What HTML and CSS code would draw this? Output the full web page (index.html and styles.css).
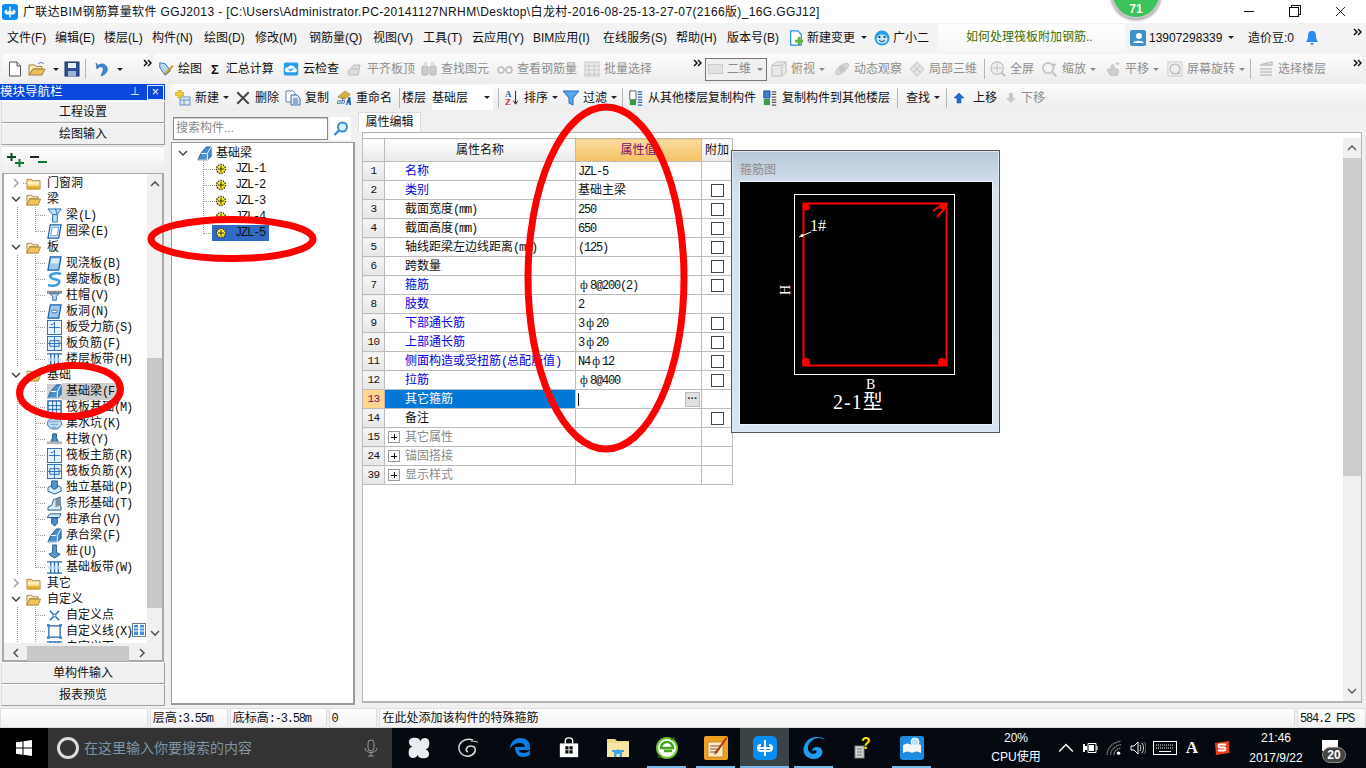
FILE: index.html
```html
<!DOCTYPE html>
<html lang="zh-CN">
<head>
<meta charset="utf-8">
<title>广联达BIM钢筋算量软件 GGJ2013</title>
<link rel="stylesheet" href="styles.css">
</head>
<body>
<svg class="defs" width="0" height="0" aria-hidden="true">
<defs>
<symbol id="logo" viewBox="0 0 16 16"><rect x="0" y="0" width="16" height="16" rx="3" fill="#0a8cf0"/><path d="M8 2.5v11M3 8h10M5 6.2a1.8 1.8 0 1 0 0 3.6h6a1.8 1.8 0 1 0 0-3.6" fill="none" stroke="#fff" stroke-width="1.4"/></symbol>
<symbol id="mr" viewBox="0 0 9 8"><path d="M1 1l3 3-3 3M5 1l3 3-3 3" fill="none" stroke="#111" stroke-width="1.500"/></symbol>
<symbol id="fold" viewBox="0 0 16 16"><path d="M1 3.500h5l1 1.500h8v9H1z" fill="#f6d777" stroke="#a98b4a"/><path d="M2 6h12v3H2z" fill="#fdf3c4"/><path d="M1.500 11h13v3h-13z" fill="#e0a92c"/></symbol>
<symbol id="foldo" viewBox="0 0 16 16"><path d="M1 3.500h5l1 1.500h6v2H4L1 14z" fill="#fbeebc" stroke="#a98b4a"/><path d="M4 7.500h11.500L13 14H1z" fill="#f2c55c" stroke="#a98b4a"/></symbol>
<symbol id="chd" viewBox="0 0 10 10"><path d="M1 3l4 4 4-4" fill="none" stroke="#444" stroke-width="1.500"/></symbol>
<symbol id="chr" viewBox="0 0 10 10"><path d="M3 1l4 4-4 4" fill="none" stroke="#aaa" stroke-width="1.700"/></symbol>
<symbol id="beam" viewBox="0 0 16 16"><path d="M1 1h14l-4 6v8H6V7z" fill="#bfe0f8" stroke="#2a6db5"/><path d="M6 7h5M9 1l2 6" stroke="#2a6db5" fill="none"/></symbol>
<symbol id="ring" viewBox="0 0 16 16"><path d="M3.500 1H15l-2.500 14H1z" fill="#e8f3fc" stroke="#1b5ea8" stroke-width="1.300"/><path d="M5.500 3.500H12.500L11 12.500H4z" fill="#fff" stroke="#5a9bd8"/></symbol>
<symbol id="slab" viewBox="0 0 16 16"><path d="M3.500 1H15l-2.500 14H1z" fill="#9cc8ef" stroke="#1b5ea8" stroke-width="1.300"/><path d="M5 3h8L12 8H4z" fill="#dff0fc"/></symbol>
<symbol id="spiral" viewBox="0 0 16 16"><path d="M15 2C8 0 1 3 4 6s10 1 9 5-7 4-12 3" fill="none" stroke="#3b9be0" stroke-width="2.600"/></symbol>
<symbol id="cap" viewBox="0 0 16 16"><path d="M0 3h16v3H0z" fill="#8d8d8d"/><path d="M3 6h10L10 9v4H6V9z" fill="#c9d4de" stroke="#2a6db5"/></symbol>
<symbol id="hole" viewBox="0 0 16 16"><path d="M3.500 1H15l-2.500 14H1z" fill="#9cc8ef" stroke="#1b5ea8" stroke-width="1.300"/><ellipse cx="8" cy="8" rx="3" ry="1.500" fill="#fff" stroke="#1b5ea8"/></symbol>
<symbol id="grid1" viewBox="0 0 16 16"><rect x=".5" y=".5" width="15" height="15" fill="#e8f3fc" stroke="#2a6db5"/><path d="M8 2v12M2 8h12M4 5c2 0 3-1 4-2" fill="none" stroke="#2a6db5"/></symbol>
<symbol id="grid2" viewBox="0 0 16 16"><rect x=".5" y=".5" width="15" height="15" fill="#dceefc" stroke="#2a6db5"/><path d="M8 1v14M3 5v6h10V5zM1 8h14" fill="none" stroke="#2a6db5"/></symbol>
<symbol id="band" viewBox="0 0 16 16"><path d="M0 2h16M0 14h16M4 2v12M8 2v12M12 2v12" fill="none" stroke="#1f66b0" stroke-width="1.400"/><path d="M1 6h14v4H1z" fill="#bcdcf5" opacity=".7"/></symbol>
<symbol id="fbeam" viewBox="0 0 16 16"><path d="M1 15l3-7 6-7h5v10l-4 4z" fill="#4b8ed0" stroke="#14528f"/><path d="M1 15h10V8l4-7M4 8h6" fill="none" stroke="#fff"/></symbol>
<symbol id="raft" viewBox="0 0 16 16"><rect x="1" y="1" width="14" height="14" fill="#e8f3fc" stroke="#1b5ea8" stroke-width="1.400"/><path d="M1 6h14M1 10h14M6 1v14M10 1v14" stroke="#1b5ea8" fill="none"/></symbol>
<symbol id="pit" viewBox="0 0 16 16"><ellipse cx="8" cy="8" rx="7.500" ry="6" fill="#bcdcf5" stroke="#2a6db5"/><path d="M3 6h10M4 9h8M6 12h4" stroke="#2a6db5" stroke-dasharray="1 1" fill="none"/></symbol>
<symbol id="pier" viewBox="0 0 16 16"><path d="M6 2h4v4l2 4H4l2-4z" fill="#4b8ed0" stroke="#14528f"/><rect x="0" y="10" width="16" height="3" fill="#b8b8b8"/></symbol>
<symbol id="iso" viewBox="0 0 16 16"><path d="M1 8l7-4 7 4v4l-7 3-7-3z" fill="#dbeaf7" stroke="#1b5ea8"/><path d="M5 1h6v7l-3 2-3-2z" fill="#5b97d2" stroke="#14528f"/></symbol>
<symbol id="strip" viewBox="0 0 16 16"><path d="M1 15v-3l4-2 2-6 7-3v9l1 2v3z" fill="#dbeaf7" stroke="#14528f"/><path d="M9 4l5-3v9l-5 2z" fill="#7e8f9f"/></symbol>
<symbol id="ptc" viewBox="0 0 16 16"><path d="M3 2h12l-2 4H0z" fill="#dbeaf7" stroke="#14528f"/><path d="M5 6h6v6l-3 3-3-3z" fill="#4b8ed0" stroke="#14528f"/></symbol>
<symbol id="pile" viewBox="0 0 16 16"><path d="M6 1h4v8l4 2-6 4-6-4 4-2z" fill="#5b97d2" stroke="#14528f"/></symbol>
<symbol id="xpt" viewBox="0 0 16 16"><path d="M3 3l10 10M13 3L3 13" stroke="#1b6fc0" stroke-width="1.500"/><circle cx="8" cy="8" r="1.500" fill="#fff" stroke="#1b6fc0"/></symbol>
<symbol id="xln" viewBox="0 0 16 16"><rect x="2" y="2" width="12" height="12" fill="none" stroke="#1b5ea8" stroke-width="1.300"/><path d="M0 0h3v3H0zM13 0h3v3h-3zM0 13h3v3H0zM13 13h3v3h-3z" fill="#3f8fe0"/></symbol>
<symbol id="gear" viewBox="0 0 12 12"><circle cx="6" cy="6" r="4.500" fill="#ffef30" stroke="#333" stroke-width="1.400" stroke-dasharray="1.500 1"/><path d="M3 6h6M6 3v6" stroke="#333"/></symbol>
<symbol id="new" viewBox="0 0 16 16"><path d="M2.500 1H10l3.500 4v10h-11z" fill="#fff" stroke="#555"/><path d="M10 1v4h3.500" fill="#ddd" stroke="#555"/></symbol>
<symbol id="open" viewBox="0 0 18 16"><path d="M1 4h6l1 1.500h6V8H5L1 14z" fill="#fbeebc" stroke="#a2823e"/><path d="M5 8h12l-3 6H1z" fill="#ecbe5c" stroke="#a2823e"/><path d="M10 3c2-2 4-2 6 0" fill="none" stroke="#4170b0"/></symbol>
<symbol id="save" viewBox="0 0 16 16"><rect x="1" y="1" width="14" height="14" fill="#2b4e96" stroke="#1c2f66"/><rect x="4" y="2" width="8" height="5" fill="#e8eef8"/><rect x="4" y="10" width="8" height="5" fill="#9fb3d8"/></symbol>
<symbol id="undo" viewBox="0 0 16 16"><path d="M3 2l1 6 2-1.800c3-1.500 5 1 4 3.500L8 15c5-1.500 7-5 6-8.500C12.500 2.500 8 2 5 4.500z" fill="#3f86d8" stroke="#20589c" stroke-width=".6"/></symbol>
<symbol id="draw" viewBox="0 0 18 18"><path d="M2 2l6 1 6 8-6 5-6-9z" fill="#bcd6f0" stroke="#2a6db5"/><path d="M7 14l9-9 1 1-8 9z" fill="#e0b030" stroke="#8a6a10" stroke-width=".6"/></symbol>
<symbol id="cloud" viewBox="0 0 20 20"><rect x="1" y="2" width="18" height="16" rx="2" fill="#2a9de8"/><path d="M5 14a3 3 0 0 1 1-6 5 5 0 0 1 9 1 2.500 2.500 0 0 1 0 5z" fill="#fff"/><path d="M7 10l2 2 4-3" fill="none" stroke="#2a9de8" stroke-width="1.500"/></symbol>
<symbol id="dim" viewBox="0 0 16 16"><path d="M1 10l6-6h6l-2 10H2z" fill="#ddd" stroke="#bbb"/><path d="M5 8h6" stroke="#bbb"/></symbol>
<symbol id="bino" viewBox="0 0 16 16"><rect x="1" y="5" width="6" height="9" rx="1" fill="#ccc" stroke="#b5b5b5"/><rect x="9" y="5" width="6" height="9" rx="1" fill="#ccc" stroke="#b5b5b5"/><rect x="3" y="1" width="3" height="4" fill="#ddd"/><rect x="10" y="1" width="3" height="4" fill="#ddd"/></symbol>
<symbol id="glass" viewBox="0 0 16 16"><circle cx="4" cy="9" r="3" fill="none" stroke="#bbb" stroke-width="1.400"/><circle cx="12" cy="9" r="3" fill="none" stroke="#bbb" stroke-width="1.400"/><path d="M7 9h2M14 5v3" stroke="#bbb"/></symbol>
<symbol id="batch" viewBox="0 0 16 16"><rect x="1" y="1" width="14" height="14" fill="#eee" stroke="#c8c8c8"/><path d="M1 5h14M1 9h14M1 13h14M5 1v14M10 1v14" stroke="#c8c8c8"/></symbol>
<symbol id="cube" viewBox="0 0 18 18"><path d="M1 5l5-4h11v12l-5 4H1z" fill="#e9e9e9" stroke="#bbb"/><path d="M1 5h11v12M12 5l5-4" fill="none" stroke="#bbb"/></symbol>
<symbol id="orbit" viewBox="0 0 18 18"><ellipse cx="9" cy="9" rx="9" ry="4" transform="rotate(-40 9 9)" fill="#d8d8d8" stroke="#c4c4c4"/><circle cx="9" cy="9" r="4" fill="#c8c8c8"/></symbol>
<symbol id="local" viewBox="0 0 18 18"><path d="M1 9l8-8 8 8-8 8z" fill="#e4e4e4" stroke="#bbb"/><path d="M5 5l8 8M13 5l-8 8" stroke="#bbb"/></symbol>
<symbol id="fit" viewBox="0 0 18 18"><circle cx="8" cy="8" r="7" fill="#f0f0f0" stroke="#bbb" stroke-width="1.200"/><path d="M8 3v10M3 8h10" stroke="#bbb"/><path d="M13 13l4 4" stroke="#bbb" stroke-width="2"/></symbol>
<symbol id="zoom" viewBox="0 0 18 18"><circle cx="7" cy="8" r="6" fill="#f4f4f4" stroke="#c4c4c4" stroke-width="2"/><path d="M12 13l4 4" stroke="#bbb" stroke-width="2"/><path d="M14 2v4M12 4h4" stroke="#bbb"/></symbol>
<symbol id="pan" viewBox="0 0 18 18"><path d="M3 11c-1-3 3-2 4-1V5c1-1 2-1 3 0v3l4 1c2 1 1 4 0 7H6z" fill="#cfcfcf" stroke="#bbb"/><path d="M14 1v4M12 3h4" stroke="#bbb"/></symbol>
<symbol id="rot" viewBox="0 0 18 18"><rect x="1" y="1" width="16" height="16" fill="#eee" stroke="#ccc"/><circle cx="9" cy="9" r="5.500" fill="none" stroke="#bbb" stroke-width="1.500"/><path d="M12 14l3 1-1-3" fill="#bbb"/></symbol>
<symbol id="floors" viewBox="0 0 16 16"><path d="M2 4l12-3v3zM2 8h12M2 11h12M2 14h12" fill="none" stroke="#c0c0c0" stroke-width="1.400"/></symbol>
<symbol id="add" viewBox="0 0 16 16"><rect x="5" y="7" width="10" height="8" fill="#dbe9f8" stroke="#6a8fbf"/><path d="M5 10h10M9 10v5" stroke="#6a8fbf"/><path d="M3 0h3v2.500h2.500v3H6V8H3V5.500H.5v-3H3z" fill="#f4d23e" stroke="#b59a20" stroke-width=".6"/></symbol>
<symbol id="del" viewBox="0 0 14 14"><path d="M2 2l10 10M12 2L2 12" stroke="#444" stroke-width="1.700"/></symbol>
<symbol id="copy" viewBox="0 0 16 16"><path d="M1 1h7l2 2v9H1z" fill="#fff" stroke="#6a7f9a"/><path d="M6 5h6l3 3v7H6z" fill="#dbe9f8" stroke="#3f6aa8"/><path d="M8 9h5M8 11h5M8 13h5" stroke="#3f6aa8"/></symbol>
<symbol id="rename" viewBox="0 0 18 18"><path d="M2 8l8-7 6 4-6 5z" fill="#d4b24a" stroke="#8c6c1c" stroke-width=".6"/><text x="1" y="16" class="mini">ab</text><path d="M11 17l3-9h2l1 9h-2v-2h-2l-.5 2z" fill="#1f5fb0"/></symbol>
<symbol id="az" viewBox="0 0 16 18"><text x="0" y="8" class="mini mini-b">A</text><text x="0" y="17" class="mini mini-r">Z</text><path d="M12 1v14M9.500 12l2.500 4 2.500-4" fill="none" stroke="#111"/></symbol>
<symbol id="filter" viewBox="0 0 16 16"><path d="M0 1h16l-6 7v7l-4-2V8z" fill="#5aa6e8" stroke="#2a6db5"/></symbol>
<symbol id="cpf" viewBox="0 0 16 18"><path d="M1 1h7v10H1z" fill="#fff" stroke="#555"/><path d="M1 11h7v6H1z" fill="#3a9c44"/><path d="M10 2h5M10 5h5M10 8h5M10 11h5M10 14h5M10 17h5" stroke="#2a6db5" stroke-width="1.400"/></symbol>
<symbol id="cpt" viewBox="0 0 16 18"><path d="M1 1h7v8H1z" fill="#3f7fd0" stroke="#1b4e90"/><path d="M1 10h7v7H1z" fill="#3a9c44"/><path d="M10 2h5M10 5h5M10 8h5M10 11h5M10 14h5M10 17h5" stroke="#555" stroke-width="1.400"/></symbol>
<symbol id="up" viewBox="0 0 12 12"><path d="M6 1l5 5H8v5H4V6H1z" fill="#1f6fd0" stroke="#12458c" stroke-width=".5"/></symbol>
<symbol id="down" viewBox="0 0 12 12"><path d="M6 11l5-5H8V1H4v5H1z" fill="#c8c8c8"/></symbol>
<symbol id="nc" viewBox="0 0 16 18"><path d="M2 1h8l4 4v12H2z" fill="#fff" stroke="#2a8fe0" stroke-width="1.400"/><path d="M7 11h3V8h3v3h3v3h-3v3h-3v-3H7z" fill="#5cb53a"/></symbol>
<symbol id="xiao" viewBox="0 0 16 16"><circle cx="8" cy="8" r="7.500" fill="#2a9de8"/><ellipse cx="8" cy="9" rx="5.500" ry="4.500" fill="#bfe7ff"/><circle cx="5.500" cy="7" r="1" fill="#123"/><circle cx="10.500" cy="7" r="1" fill="#123"/><path d="M5 10c2 2 4 2 6 0" fill="none" stroke="#123"/></symbol>
<symbol id="user" viewBox="0 0 16 16"><rect width="16" height="16" rx="2" fill="#3f8fc8"/><circle cx="9" cy="6" r="3" fill="#fff"/><path d="M3 13c1-3 10-3 11 0z" fill="#fff"/></symbol>
<symbol id="bell" viewBox="0 0 14 16"><path d="M7 1c3 0 4 2 4 5 0 3 1 4 2 6H1c1-2 2-3 2-6 0-3 1-5 4-5z" fill="#2f8af0"/><path d="M5 13h4l-2 2.500z" fill="#2f8af0"/></symbol>
<symbol id="mag" viewBox="0 0 16 16"><circle cx="9.500" cy="6" r="4.500" fill="#dff0fc" stroke="#3a8fd8" stroke-width="2"/><path d="M6 9.500L1.500 14" stroke="#3a8fd8" stroke-width="2.400"/></symbol>
<symbol id="win" viewBox="0 0 16 16"><path d="M0 2.300L6.500 1.400V7.600H0zM7.500 1.300L16 0v7.600H7.500zM0 8.500h6.500v6.200L0 13.800zM7.500 8.500H16V16l-8.500-1.200z" fill="#fff"/></symbol>
<symbol id="fan" viewBox="0 0 22 22"><path d="M11 11C5 11 1 9 1 5s4-5 8-4 4 5 2 10zM11 11c0-6 2-10 6-10s5 4 4 8-5 4-10 2zM11 11c6 0 10 2 10 6s-4 5-8 4-4-5-2-10zM11 11c0 6-2 10-6 10s-5-4-4-8 5-4 10-2z" fill="#e9eef0"/></symbol>
<symbol id="swirl" viewBox="0 0 22 22"><path d="M16 3C8 0 1 6 2 12s8 9 13 6 4-9-1-9-6 5-3 6" fill="none" stroke="#d8d8d8" stroke-width="1.500"/><path d="M14 4c3 0 5 1 7 1" fill="none" stroke="#d8d8d8"/></symbol>
<symbol id="edge" viewBox="0 0 22 22"><path d="M11 1C5 1 1 6 1 12c2-4 6-6 10-6 3 0 5 2 5 4H6c0 6 3 10 8 10 3 0 5-1 7-2v-5c-2 2-4 3-7 3-2 0-4-1-4-3h11v-3c0-6-4-9-10-9z" fill="#0a7ee0"/></symbol>
<symbol id="store" viewBox="0 0 22 24"><path d="M1 7h20v15H1z" fill="#fff"/><path d="M7 7V4c0-4 8-4 8 0v3" fill="none" stroke="#fff" stroke-width="1.500"/><path d="M7 10h3.500v3.500H7zM11.500 10H15v3.500h-3.500zM7 14.500h3.500V18H7zM11.500 14.500H15V18h-3.500z" fill="#05090d"/></symbol>
<symbol id="explorer" viewBox="0 0 22 22"><path d="M0 2h8l2 2h12v16H0z" fill="#f0d98a"/><path d="M0 6h22v14H0z" fill="#f6e6a8"/><path d="M7 20v-5l4-3 4 3v5h-2.500v-3h-3v3z" fill="#3fa4e8"/><path d="M5 13h12v2H5z" fill="#3fa4e8"/></symbol>
<symbol id="ie" viewBox="0 0 22 22"><circle cx="11" cy="11" r="10" fill="#fff" stroke="#6cc22c" stroke-width="2"/><path d="M5 11a6 6 0 0 1 12 0H5zM8 14h8" stroke="#3fa81c" stroke-width="2.500" fill="none"/><path d="M4 18l-2 3M19 1l-4 1" stroke="#2a6010" stroke-width="1.500"/></symbol>
<symbol id="note" viewBox="0 0 24 24"><rect width="24" height="24" rx="2" fill="#f0a020"/><path d="M4 6h15v15H4z" fill="#ffe9c0" stroke="#a86a10" stroke-width=".6"/><path d="M6 10h10M6 13h10M6 16h8" stroke="#855"/><path d="M22 1L11 16l-1 3 3-2L23 3z" fill="#b03a18"/></symbol>
<symbol id="gapp" viewBox="0 0 24 24"><rect width="24" height="24" rx="5" fill="#0a8cf0"/><path d="M12 4v16M5 12h14M8 9a3 3 0 1 0 0 6h8a3 3 0 1 0 0-6" fill="none" stroke="#fff" stroke-width="2"/></symbol>
<symbol id="gg" viewBox="0 0 24 24"><path d="M23 3c-5-3-14-3-18 2S0 16 4 20s12 4 15 0 1-9-4-9c-3 0-5 2-5 4 3-2 6 0 4 2-3 2-8 0-8-5s5-10 11-10c3 0 5 2 6 1z" fill="#1e9cf0"/></symbol>
<symbol id="qm" viewBox="0 0 18 24"><rect x="1" y="10" width="9" height="12" fill="#d8d8d8" stroke="#888"/><path d="M3 13h5M3 16h5M3 19h5" stroke="#666"/><text x="7" y="13" class="qtxt">?</text></symbol>
<symbol id="book" viewBox="0 0 24 24"><rect width="24" height="24" rx="3" fill="#1e8ae0"/><path d="M3 17c3-2 6-2 9 0 3-2 6-2 9 0V9c-3-2-6-2-9 0-3-2-6-2-9 0z" fill="#f4f4f4"/><circle cx="15" cy="6" r="4" fill="#bfe3ff" stroke="#fff"/></symbol>
<symbol id="plug" viewBox="0 0 16 16"><path d="M1 4h2v2h2v4H3v2H1z M3 5v-1" fill="#fff"/><path d="M6 3.500h8v9H6z" fill="none" stroke="#fff"/><path d="M7 5h5v6H7z" fill="#fff"/><path d="M15 6v4" stroke="#fff"/></symbol>
<symbol id="wifi" viewBox="0 0 14 14"><path d="M1 13C1 7 6 2 13 1M4 13C4 9 8 5 13 4M7 13c0-3 2-5 6-6" fill="none" stroke="#9a9a9a" stroke-dasharray="1.200 .6"/><circle cx="11" cy="11.500" r="1.500" fill="#fff"/></symbol>
<symbol id="vol" viewBox="0 0 16 16"><path d="M1 6h3l4-4v12l-4-4H1z" fill="none" stroke="#fff"/><path d="M10 5c1 2 1 4 0 6M12 3c2 3 2 7 0 10" fill="none" stroke="#ddd"/><path d="M14.500 2c2 4 2 8 0 12" fill="none" stroke="#777"/></symbol>
<symbol id="kbd" viewBox="0 0 24 14"><rect x=".5" y=".5" width="23" height="13" fill="none" stroke="#fff"/><path d="M3 4h18M3 7h18" stroke="#fff" stroke-dasharray="1 1"/><path d="M6 10.500h12" stroke="#fff"/></symbol>
<symbol id="sogou" viewBox="0 0 16 16"><path d="M1 3l14-2 .5 12L2 15z" fill="#e8401c"/><path d="M12 4.500H6c-2 0-2 3 0 3h4c2 0 2 3 0 3H4" fill="none" stroke="#fff" stroke-width="1.800"/></symbol>
<symbol id="msg" viewBox="0 0 16 14"><path d="M0 0h16v11H5l-3 3v-3H0z" fill="#fff"/></symbol>
</defs>
</svg>

<div class="app">
  <header class="title">
    <svg class="ic16 title-logo"><use href="#logo"/></svg>
    <span class="title-text">广联达BIM钢筋算量软件 GGJ2013 - [C:\Users\Administrator.PC-20141127NRHM\Desktop\白龙村-2016-08-25-13-27-07(2166版)_16G.GGJ12]</span>
    <div class="winctl">
      <span class="wc wc-min"></span>
      <span class="wc wc-max"></span>
      <svg class="wc-x" viewBox="0 0 12 12"><path d="M1 1l10 10M11 1L1 11" stroke="#111" stroke-width="1"/></svg>
    </div>
  </header>

  <nav class="menu">
    <span>文件(F)</span><span>编辑(E)</span><span>楼层(L)</span><span>构件(N)</span><span>绘图(D)</span><span>修改(M)</span><span>钢筋量(Q)</span><span>视图(V)</span><span>工具(T)</span><span>云应用(Y)</span><span>BIM应用(I)</span><span>在线服务(S)</span><span>帮助(H)</span><span>版本号(B)</span>
    <span class="t"><svg class="ic16"><use href="#nc"/></svg>新建变更<i class="arr"></i></span>
    <span class="t"><svg class="ic16"><use href="#xiao"/></svg>广小二</span>
    <span class="tip">如何处理筏板附加钢筋..</span>
    <span class="t usr"><svg class="ic16"><use href="#user"/></svg>13907298339<i class="arr"></i></span>
    <span>造价豆:0</span>
    <svg class="ic16 bell"><use href="#bell"/></svg>
    <svg class="more more-m"><use href="#mr"/></svg>
  </nav>

  <div class="tb1">
    <div class="bar bar-a">
      <svg class="ic16"><use href="#new"/></svg>
      <svg class="ic18"><use href="#open"/></svg>
      <i class="arr"></i>
      <svg class="ic16"><use href="#save"/></svg>
      <i class="sep"></i>
      <svg class="ic16"><use href="#undo"/></svg>
      <i class="arr"></i>
      <svg class="more"><use href="#mr"/></svg>
    </div>
    <div class="bar bar-b">
      <span class="t"><svg class="ic16"><use href="#draw"/></svg>绘图</span>
      <span class="t sig"><b>Σ</b>汇总计算</span>
      <span class="t"><svg class="ic16"><use href="#cloud"/></svg>云检查</span>
      <span class="t off"><svg class="ic16"><use href="#dim"/></svg>平齐板顶</span>
      <span class="t off"><svg class="ic16"><use href="#bino"/></svg>查找图元</span>
      <span class="t off"><svg class="ic16"><use href="#glass"/></svg>查看钢筋量</span>
      <span class="t off"><svg class="ic16"><use href="#batch"/></svg>批量选择</span>
      <svg class="more"><use href="#mr"/></svg>
      <span class="combo2"><i class="swatch"></i>二维<i class="arr dim"></i></span>
      <span class="t off"><svg class="ic16"><use href="#cube"/></svg>俯视<i class="arr dim"></i></span>
      <span class="t off"><svg class="ic16"><use href="#orbit"/></svg>动态观察</span>
      <span class="t off"><svg class="ic16"><use href="#local"/></svg>局部三维</span>
      <i class="sep"></i>
      <span class="t off"><svg class="ic16"><use href="#fit"/></svg>全屏</span>
      <span class="t off"><svg class="ic16"><use href="#zoom"/></svg>缩放<i class="arr dim"></i></span>
      <span class="t off"><svg class="ic16"><use href="#pan"/></svg>平移<i class="arr dim"></i></span>
      <span class="t off"><svg class="ic16"><use href="#rot"/></svg>屏幕旋转<i class="arr dim"></i></span>
      <i class="sep"></i>
      <span class="t off"><svg class="ic16"><use href="#floors"/></svg>选择楼层</span>
      <svg class="more"><use href="#mr"/></svg>
    </div>
  </div>

  <div class="work">
    <aside class="nav">
      <div class="nav-head"><span>模块导航栏</span><span class="pin">⊥</span><span class="nav-x">×</span></div>
      <button class="nav-btn">工程设置</button>
      <button class="nav-btn">绘图输入</button>
      <div class="nav-tools">
        <svg class="pm" viewBox="0 0 18 16"><path d="M0 5h9M4.500 1v8" stroke="#0c4a20" stroke-width="2"/><path d="M8 11h9M12.500 7v8" stroke="#0d7a34" stroke-width="2"/></svg>
        <svg class="pm" viewBox="0 0 18 16"><path d="M0 5h9" stroke="#222" stroke-width="2"/><path d="M8 10h9" stroke="#0d7a34" stroke-width="2"/></svg>
      </div>
      <div class="nav-tree">
        <div class="nt-body">
          <div class="nt-list">
            <div class="r top vl"><svg class="tw"><use href="#chr"/></svg><svg class="ic15"><use href="#fold"/></svg><span>门窗洞</span></div>
            <div class="r top"><svg class="tw"><use href="#chd"/></svg><svg class="ic15"><use href="#foldo"/></svg><span>梁</span></div>
            <div class="r leaf vl"><svg class="ic15"><use href="#beam"/></svg><span>梁<em>(L)</em></span></div>
            <div class="r leaf vl end"><svg class="ic15"><use href="#ring"/></svg><span>圈梁<em>(E)</em></span></div>
            <div class="r top"><svg class="tw"><use href="#chd"/></svg><svg class="ic15"><use href="#foldo"/></svg><span>板</span></div>
            <div class="r leaf vl"><svg class="ic15"><use href="#slab"/></svg><span>现浇板<em>(B)</em></span></div>
            <div class="r leaf vl"><svg class="ic15"><use href="#spiral"/></svg><span>螺旋板<em>(B)</em></span></div>
            <div class="r leaf vl"><svg class="ic15"><use href="#cap"/></svg><span>柱帽<em>(V)</em></span></div>
            <div class="r leaf vl"><svg class="ic15"><use href="#hole"/></svg><span>板洞<em>(N)</em></span></div>
            <div class="r leaf vl"><svg class="ic15"><use href="#grid1"/></svg><span>板受力筋<em>(S)</em></span></div>
            <div class="r leaf vl"><svg class="ic15"><use href="#grid2"/></svg><span>板负筋<em>(F)</em></span></div>
            <div class="r leaf vl end"><svg class="ic15"><use href="#band"/></svg><span>楼层板带<em>(H)</em></span></div>
            <div class="r top"><svg class="tw"><use href="#chd"/></svg><svg class="ic15"><use href="#foldo"/></svg><span>基础</span></div>
            <div class="r leaf vl sel"><svg class="ic15"><use href="#fbeam"/></svg><span>基础梁<em>(F)</em></span></div>
            <div class="r leaf vl"><svg class="ic15"><use href="#raft"/></svg><span>筏板基础<em>(M)</em></span></div>
            <div class="r leaf vl"><svg class="ic15"><use href="#pit"/></svg><span>集水坑<em>(K)</em></span></div>
            <div class="r leaf vl"><svg class="ic15"><use href="#pier"/></svg><span>柱墩<em>(Y)</em></span></div>
            <div class="r leaf vl"><svg class="ic15"><use href="#grid1"/></svg><span>筏板主筋<em>(R)</em></span></div>
            <div class="r leaf vl"><svg class="ic15"><use href="#grid2"/></svg><span>筏板负筋<em>(X)</em></span></div>
            <div class="r leaf vl"><svg class="ic15"><use href="#iso"/></svg><span>独立基础<em>(P)</em></span></div>
            <div class="r leaf vl"><svg class="ic15"><use href="#strip"/></svg><span>条形基础<em>(T)</em></span></div>
            <div class="r leaf vl"><svg class="ic15"><use href="#ptc"/></svg><span>桩承台<em>(V)</em></span></div>
            <div class="r leaf vl"><svg class="ic15"><use href="#fbeam"/></svg><span>承台梁<em>(F)</em></span></div>
            <div class="r leaf vl"><svg class="ic15"><use href="#pile"/></svg><span>桩<em>(U)</em></span></div>
            <div class="r leaf vl end"><svg class="ic15"><use href="#band"/></svg><span>基础板带<em>(W)</em></span></div>
            <div class="r top"><svg class="tw"><use href="#chr"/></svg><svg class="ic15"><use href="#fold"/></svg><span>其它</span></div>
            <div class="r top"><svg class="tw"><use href="#chd"/></svg><svg class="ic15"><use href="#foldo"/></svg><span>自定义</span></div>
            <div class="r leaf vl"><svg class="ic15"><use href="#xpt"/></svg><span>自定义点</span></div>
            <div class="r leaf vl"><svg class="ic15"><use href="#xln"/></svg><span>自定义线<em>(X)</em></span></div>
            <div class="r leaf vl"><svg class="ic15"><use href="#band"/></svg><span>自定义面</span></div>
          </div>
          <svg class="float-grid" viewBox="0 0 14 14"><rect x=".5" y=".5" width="13" height="13" fill="#fff" stroke="#6a7a8a"/><path d="M2 2h4v10H2zM8 2h4v10H8z" fill="#3f8fe0"/><path d="M2 5h4M2 8h4M8 5h4M8 8h4" stroke="#fff"/></svg>
          <div class="vbar">
            <svg class="sb-arrow" viewBox="0 0 10 10"><path d="M1 7l4-4 4 4" fill="none" stroke="#555" stroke-width="1.600"/></svg>
            <div class="vthumb"></div>
            <svg class="sb-arrow" viewBox="0 0 10 10"><path d="M1 3l4 4 4-4" fill="none" stroke="#555" stroke-width="1.600"/></svg>
          </div>
        </div>
        <div class="hbar">
          <svg class="sb-arrow" viewBox="0 0 10 10"><path d="M7 1L3 5l4 4" fill="none" stroke="#555" stroke-width="1.600"/></svg>
          <div class="hthumb"></div>
          <svg class="sb-arrow" viewBox="0 0 10 10"><path d="M3 1l4 4-4 4" fill="none" stroke="#555" stroke-width="1.600"/></svg>
        </div>
      </div>
      <button class="nav-btn">单构件输入</button>
      <button class="nav-btn">报表预览</button>
    </aside>

    <div class="main">
      <div class="tb2">
        <span class="t"><svg class="ic16"><use href="#add"/></svg>新建<i class="arr"></i></span>
        <span class="t"><svg class="ic16"><use href="#del"/></svg>删除</span>
        <span class="t"><svg class="ic16"><use href="#copy"/></svg>复制</span>
        <span class="t"><svg class="ic16"><use href="#rename"/></svg>重命名</span>
        <i class="sep"></i>
        <span>楼层</span>
        <span class="combo"><span>基础层</span><i class="arr"></i></span>
        <i class="sep"></i>
        <span class="t"><svg class="ic16"><use href="#az"/></svg>排序<i class="arr"></i></span>
        <span class="t"><svg class="ic16"><use href="#filter"/></svg>过滤<i class="arr"></i></span>
        <i class="sep"></i>
        <span class="t"><svg class="ic16"><use href="#cpf"/></svg>从其他楼层复制构件</span>
        <span class="t"><svg class="ic16"><use href="#cpt"/></svg>复制构件到其他楼层</span>
        <i class="sep"></i>
        <span class="t">查找<i class="arr"></i></span>
        <i class="sep"></i>
        <span class="t mv"><svg class="ic12"><use href="#up"/></svg>上移</span>
        <span class="t off"><svg class="ic12"><use href="#down"/></svg>下移</span>
      </div>
      <div class="panes">
        <section class="mid">
          <div class="search">
            <span class="search-box">搜索构件...</span>
            <span class="search-btn"><svg class="ic16"><use href="#mag"/></svg></span>
          </div>
          <div class="mid-tree">
            <div class="mr root"><svg class="tw"><use href="#chd"/></svg><svg class="ic15"><use href="#fbeam"/></svg><span>基础梁</span></div>
            <div class="mr kid"><svg class="ic12"><use href="#gear"/></svg><em>JZL-1</em></div>
            <div class="mr kid"><svg class="ic12"><use href="#gear"/></svg><em>JZL-2</em></div>
            <div class="mr kid"><svg class="ic12"><use href="#gear"/></svg><em>JZL-3</em></div>
            <div class="mr kid"><svg class="ic12"><use href="#gear"/></svg><em>JZL-4</em></div>
            <div class="mr kid last"><span class="picked"><svg class="ic12"><use href="#gear"/></svg><em>JZL-5</em></span></div>
          </div>
        </section>
        <section class="props">
          <div class="tab">属性编辑</div>
          <div class="prop-panel">
            <div class="prop-scroll">
              <table class="grid">
                <colgroup><col class="c1"><col class="c2"><col class="c3"><col class="c4"></colgroup>
                <thead><tr><th></th><th>属性名称</th><th class="hl">属性值</th><th>附加</th></tr></thead>
                <tbody>
                  <tr><td class="n">1</td><td class="lk">名称</td><td class="v"><em>JZL-5</em></td><td></td></tr>
                  <tr><td class="n">2</td><td class="lk">类别</td><td class="v">基础主梁</td><td><i class="cb"></i></td></tr>
                  <tr><td class="n">3</td><td class="nm">截面宽度<em>(mm)</em></td><td class="v"><em>250</em></td><td><i class="cb"></i></td></tr>
                  <tr><td class="n">4</td><td class="nm">截面高度<em>(mm)</em></td><td class="v"><em>650</em></td><td><i class="cb"></i></td></tr>
                  <tr><td class="n">5</td><td class="nm">轴线距梁左边线距离<em>(mm)</em></td><td class="v"><em>(125)</em></td><td><i class="cb"></i></td></tr>
                  <tr><td class="n">6</td><td class="nm">跨数量</td><td class="v"></td><td><i class="cb"></i></td></tr>
                  <tr><td class="n">7</td><td class="lk">箍筋</td><td class="v"><b class="rb">ф</b><em>8@200(2)</em></td><td><i class="cb"></i></td></tr>
                  <tr><td class="n">8</td><td class="lk">肢数</td><td class="v"><em>2</em></td><td></td></tr>
                  <tr><td class="n">9</td><td class="lk">下部通长筋</td><td class="v"><em>3</em><b class="rb">ф</b><em>20</em></td><td><i class="cb"></i></td></tr>
                  <tr><td class="n">10</td><td class="lk">上部通长筋</td><td class="v"><em>3</em><b class="rb">ф</b><em>20</em></td><td><i class="cb"></i></td></tr>
                  <tr><td class="n">11</td><td class="lk">侧面构造或受扭筋<em>(</em>总配筋值<em>)</em></td><td class="v"><em>N4</em><b class="rb">ф</b><em>12</em></td><td><i class="cb"></i></td></tr>
                  <tr><td class="n">12</td><td class="lk">拉筋</td><td class="v"><b class="rb">ф</b><em>8@400</em></td><td><i class="cb"></i></td></tr>
                  <tr class="cur"><td class="n">13</td><td class="nm">其它箍筋</td><td class="v"><div class="edit"><i class="caret"></i><span class="dots">···</span></div></td><td></td></tr>
                  <tr><td class="n">14</td><td class="nm">备注</td><td class="v"></td><td><i class="cb"></i></td></tr>
                  <tr class="grp"><td class="n">15</td><td class="gn"><div class="gi"><i class="plus"></i>其它属性</div></td><td></td><td></td></tr>
                  <tr class="grp"><td class="n">24</td><td class="gn"><div class="gi"><i class="plus"></i>锚固搭接</div></td><td></td><td></td></tr>
                  <tr class="grp"><td class="n">39</td><td class="gn"><div class="gi"><i class="plus"></i>显示样式</div></td><td></td><td></td></tr>
                </tbody>
              </table>
            </div>
            <div class="pbar">
              <svg class="sb-arrow" viewBox="0 0 10 10"><path d="M1 7l4-4 4 4" fill="none" stroke="#555" stroke-width="1.400"/></svg>
              <div class="pthumb"></div>
              <svg class="sb-arrow" viewBox="0 0 10 10"><path d="M1 3l4 4 4-4" fill="none" stroke="#555" stroke-width="1.400"/></svg>
            </div>
          </div>
        </section>
      </div>
    </div>
  </div>

  <footer class="status">
    <span class="s s0"></span>
    <span class="s s1">层高<em>:3.55m</em></span>
    <span class="s s2">底标高<em>:-3.58m</em></span>
    <span class="s s3"><em>0</em></span>
    <span class="s s4">在此处添加该构件的特殊箍筋</span>
    <span class="s s5"><em>584.2 FPS</em></span>
  </footer>

  <div class="taskbar">
    <div class="start"><svg class="ic16"><use href="#win"/></svg></div>
    <div class="tsearch">
      <i class="cortana"></i>
      <span class="ts-text">在这里输入你要搜索的内容</span>
      <svg class="mic" viewBox="0 0 14 18"><rect x="4" y="1" width="6" height="11" rx="3" fill="none" stroke="#999"/><path d="M1 9c0 6 12 6 12 0M7 14v3M4 17h6" fill="none" stroke="#999"/></svg>
    </div>
    <div class="ti"><svg class="ic22"><use href="#fan"/></svg></div>
    <div class="ti"><svg class="ic22"><use href="#swirl"/></svg></div>
    <div class="ti ti-shift"><svg class="ic22"><use href="#edge"/></svg></div>
    <div class="ti"><svg class="ic22"><use href="#store"/></svg></div>
    <div class="ti"><svg class="ic22"><use href="#explorer"/></svg></div>
    <div class="ti run"><svg class="ic22"><use href="#ie"/></svg></div>
    <div class="ti run"><svg class="ic24"><use href="#note"/></svg></div>
    <div class="ti run act"><svg class="ic24"><use href="#gapp"/></svg></div>
    <div class="ti run"><svg class="ic24"><use href="#gg"/></svg></div>
    <div class="ti"><svg class="ic24"><use href="#qm"/></svg></div>
    <div class="ti run"><svg class="ic24"><use href="#book"/></svg></div>
    <div class="tray">
      <div class="cpu"><span>20%</span><span>CPU使用</span></div>
      <svg class="trc" viewBox="0 0 14 14"><path d="M1 10l6-6 6 6" fill="none" stroke="#fff" stroke-width="1.200"/></svg>
      <svg class="trc" viewBox="0 0 16 16"><use href="#plug"/></svg>
      <svg class="trc" viewBox="0 0 14 14"><use href="#wifi"/></svg>
      <svg class="trc" viewBox="0 0 16 16"><use href="#vol"/></svg>
      <svg class="trk" viewBox="0 0 24 14"><use href="#kbd"/></svg>
      <span class="ime">A</span>
      <span class="tr-s"><svg class="ic16"><use href="#sogou"/></svg></span>
      <div class="clock"><span>21:46</span><span>2017/9/22</span></div>
      <div class="notif"><svg class="msg"><use href="#msg"/></svg><b class="nbadge">20</b></div>
    </div>
  </div>
</div>

<div class="ball"><span>71</span></div>

<div class="popup">
  <div class="pop-title">箍筋图</div>
  <svg class="pop-canvas" viewBox="0 0 252 242">
    <rect width="252" height="242" fill="#000"/>
    <rect x="54.500" y="12.500" width="160" height="180" fill="none" stroke="#fff"/>
    <rect x="63.500" y="21.500" width="143" height="162" fill="none" stroke="#f00" stroke-width="2"/>
    <g fill="#f00"><circle cx="66" cy="25" r="3.500"/><circle cx="66" cy="180" r="4"/><circle cx="202" cy="180" r="4"/><circle cx="203" cy="24" r="3.500"/></g>
    <path d="M203 22l-10 7M205 26l-8 9" stroke="#f00" stroke-width="2"/>
    <path d="M59 55l12-5" stroke="#fff"/><circle cx="62" cy="53.500" r="1.500" fill="#fff"/>
    <text x="70" y="49" class="cv cv16">1#</text>
    <text x="0" y="0" class="cv cv14" transform="translate(50 113) rotate(-90)">H</text>
    <text x="126" y="207" class="cv cv14">B</text>
    <text x="93" y="227" class="cv cv20">2-1型</text>
  </svg>
</div>

<svg class="marks" viewBox="0 0 1366 768" aria-hidden="true">
  <ellipse cx="232" cy="239" rx="81" ry="19.500"/>
  <ellipse class="mk-left" cx="70" cy="391" rx="50.500" ry="25.500" transform="rotate(-3 70 391)"/>
  <ellipse cx="606" cy="278" rx="78" ry="171"/>
</svg>
</body>
</html>
```

FILE: styles.css
```css
* { box-sizing: border-box; }
html, body { margin: 0; padding: 0; }
body {
  width: 1366px; height: 768px; overflow: hidden; position: relative;
  font: 12px/16px "Liberation Sans", "Noto Sans CJK SC", sans-serif;
  color: #111; background: #f0f0f0;
}
.defs { position: absolute; }
.mini { font: italic 9px "Liberation Serif", serif; fill: #333; }
.mini-b { font: bold 10px "Liberation Serif", serif; fill: #1f5fb0; }
.mini-r { font: bold 10px "Liberation Serif", serif; fill: #b03030; }
.qtxt { font: bold 16px "Liberation Sans", sans-serif; fill: #ffe000; }
em { font: 12px/16px "Liberation Mono", "Noto Sans CJK SC", monospace; letter-spacing: -1.2px; }
svg { flex: none; display: block; }
.ic12 { width: 12px; height: 12px; }
.ic15 { width: 15px; height: 15px; }
.ic16 { width: 16px; height: 16px; }
.ic18 { width: 18px; height: 16px; }
.ic22 { width: 22px; height: 22px; }
.ic24 { width: 24px; height: 24px; }

.app { width: 1366px; height: 768px; display: flex; flex-direction: column; }

/* title bar */
.title { height: 23px; background: #fff; display: flex; align-items: center; padding-left: 2px; }
.title-logo { margin-right: 5px; }
.title-text { font-size: 12px; letter-spacing: .37px; white-space: nowrap; }
.winctl { margin-left: auto; display: flex; align-items: center; height: 23px; padding-top: 0; }
.wc { display: block; }
.wc-min { width: 10px; height: 1px; background: #111; margin-right: 35px; }
.wc-max { width: 10px; height: 10px; border: 1px solid #111; margin-right: 36px; box-shadow: 2px -2px 0 -1px #fff, 2px -2px 0 0 #111; }
.wc-x { width: 11px; height: 11px; margin-right: 20px; }

/* shared toolbar bits */
.t { display: flex; align-items: center; gap: 4px; white-space: nowrap; }
.off { color: #8e8e8e; }
.arr { display: block; flex: none; width: 0; height: 0; border: 3px solid transparent; border-top: 3px solid #222; border-bottom: 0; }
.arr.dim { border-top-color: #888; }
.sep { display: block; width: 1px; height: 20px; background: #b5b5b5; }
.more { width: 9px; height: 8px; align-self: start; margin-top: 5px; }
.more-m { margin-top: 4px; }

/* menu */
.menu {
  height: 31px; padding: 1px 0 3px 7px; background: #f3f3f3; display: grid; align-items: center;
  grid-template-columns: 48px 49px 48px 52px 51px 54px 64px 50px 49px 61px 70px 73px 51px 61px 86px 64px 192px 118px 57px 48px 13px;
  white-space: nowrap;
}
.menu .t { gap: 3px; }
.menu .t .arr { margin-left: 3px; }
.bell { margin-left: -1px; }
.tip { align-self: stretch; background: linear-gradient(#fff, #f7f7f7); color: #3c6e00; text-align: left; padding: 5px 0 0 28px; margin-right: 5px; border-radius: 3px; }
.usr { gap: 4px; }

/* first toolbar row */
.tb1 { height: 30px; display: flex; padding: 0 2px; gap: 3px; background: #f0f0f0; }
.bar { height: 30px; background: linear-gradient(#fcfcfc, #ececec); border-radius: 3px; display: grid; align-items: center; padding-left: 5px; }
.bar-a { width: 148px; grid-template-columns: 21px 25px 11px 21px 8px 24px 26px 10px; }
.bar-b {
  width: 1209px;
  grid-template-columns: 53px 72px 64px 74px 76px 87px 109px 12px 66px 63px 75px 75px 6px 52px 63px 62px 83px 8px 95px 12px;
}
.sig b { font: bold 13px "Liberation Sans", sans-serif; margin-right: 3px; }
.combo2 { width: 62px; height: 23px; border: 1px solid #777; background: #f0f0f0; display: flex; align-items: center; gap: 4px; padding-left: 2px; color: #888; }
.swatch { display: block; width: 15px; height: 10px; background: #e2e2e2; border: 1px solid #ccc; }
.combo2 .arr { margin-left: 2px; }

/* work area */
.work { height: 623px; display: flex; }
.nav { width: 165px; display: flex; flex-direction: column; background: #f0f0f0; }
.nav-head { height: 16px; background: #0a47dc; color: #fff; display: flex; align-items: center; padding-left: 0; font-size: 12.500px; white-space: nowrap; }
.pin { margin-left: auto; margin-right: 7px; font-size: 10px; }
.nav-x { width: 17px; height: 15px; border: 1px solid #dfe8ff; text-align: center; line-height: 12px; margin-right: 1px; }
.nav-btn { font: inherit; height: 22px; padding: 0; margin: 0 0 0 1px; width: 164px; flex: none; background: #f0f0f0; border: 1px solid #a0a0a0; border-left-color: #ddd; border-top-color: #fff; color: #111; }
.nav > .nav-head + .nav-btn { margin-top: 1px; }
.nav-tools { height: 27px; margin: 1px 1px 0 2px; background: linear-gradient(#fff, #ececec); display: flex; align-items: center; gap: 5px; padding-left: 5px; border-top: 1px solid #ddd; }
.pm { width: 18px; height: 16px; }
.nav-tree { height: 489px; margin: 0 1px 0 2px; border: 2px solid #a9a9a9; border-top-width: 1px; background: #f0f0f0; display: flex; flex-direction: column; flex: none; }
.nt-body { flex: none; height: 469px; display: flex; position: relative; }
.nt-list { width: 143px; height: 469px; background: #fff; overflow: hidden; padding-top: 1px; flex: none; }
.float-grid { position: absolute; left: 128px; top: 449px; width: 14px; height: 14px; }
.vbar { width: 15px; display: flex; flex-direction: column; align-items: center; background: #f0f0f0; }
.sb-arrow { width: 10px; height: 10px; margin: 5px 0; flex: none; }
.vthumb { width: 15px; height: 251px; background: #c8c8c8; margin-top: 164px; margin-bottom: 15px; }
.hbar { flex: 1; display: flex; align-items: center; padding: 0 0 0 7px; }
.hthumb { width: 102px; height: 15px; background: #c8c8c8; margin: 0 8px 0 6px; }

.r { height: 16px; display: flex; align-items: center; white-space: nowrap; background-repeat: no-repeat; }
.top { padding-left: 7px; }
.tw { width: 10px; height: 10px; margin-right: 5px; }
.top .ic15 { margin-right: 5px; }
.top span { margin-left: 1px; }
.leaf { padding-left: 43px; }
.leaf .ic15 { margin-right: 4px; }
.vl {
  background-image:
    repeating-linear-gradient(#999 0 1px, transparent 1px 2px),
    repeating-linear-gradient(#999 0 1px, transparent 1px 2px),
    repeating-linear-gradient(90deg, #999 0 1px, transparent 1px 2px);
  background-size: 1px 16px, 1px 16px, 9px 1px;
  background-position: 13px 0, 31px 0, 32px 8px;
}
.top.vl { background-image: repeating-linear-gradient(90deg, #999 0 1px, transparent 1px 2px); background-size: 4px 1px; background-position: 19px 8px; }
.leaf.end { background-size: 1px 16px, 1px 9px, 9px 1px; }
.sel span { background: #cfcfcf; }
.sel { background-color: transparent; }
.sel .ic15 { background: #cfcfcf; margin-right: 0; padding-right: 0; }
.sel span { padding-left: 4px; }

/* main */
.main { flex: 1; display: flex; flex-direction: column; padding-left: 6px; min-width: 0; }
.tb2 {
  height: 27px; background: linear-gradient(#fcfcfc, #ececec); border-radius: 3px; padding-left: 4px; display: grid; align-items: center;
  grid-template-columns: 60px 50px 51px 63px 3px 30px 66px 6px 59px 59px 6px 134px 135px 9px 40px 7px 52px 60px;
  white-space: nowrap;
}
.mv { gap: 8px; }
.combo { width: 61px; height: 24px; background: #fff; display: flex; align-items: center; justify-content: space-between; padding: 0 3px 0 0; }
.panes { flex: 1; display: flex; min-height: 0; }
.mid { width: 184px; display: flex; flex-direction: column; }
.search { height: 31px; padding-top: 6px; display: flex; padding-left: 2px; }
.search-box { width: 155px; height: 23px; border: 1px solid #888; background: #fff; color: #888; padding-left: 2px; line-height: 20px; box-shadow: inset 0 1px 0 #ccc; }
.search-btn { width: 21px; height: 23px; margin-left: 2px; background: #fff; display: flex; align-items: center; justify-content: center; }
.mid-tree { height: 563px; background: #fff; border: 1px solid #9a9a9a; border-width: 1px 2px 2px 1px; padding-top: 2px; }
.mr { height: 16px; display: flex; align-items: center; }
.root { padding-left: 6px; }
.root .tw { margin-right: 9px; }
.root .ic15 { margin-right: 4px; }
.kid { padding-left: 43px; position: relative; gap: 8px; }
.kid::before { content: ""; position: absolute; left: 31px; top: 0; bottom: 0; width: 14px; background:
  repeating-linear-gradient(90deg, #999 0 1px, transparent 1px 2px) 1px 8px / 14px 1px no-repeat,
  repeating-linear-gradient(#999 0 1px, transparent 1px 2px) 0 0 / 1px 16px no-repeat; }
.kid.last::before { background:
  repeating-linear-gradient(90deg, #999 0 1px, transparent 1px 2px) 1px 8px / 14px 1px no-repeat,
  repeating-linear-gradient(#999 0 1px, transparent 1px 2px) 0 0 / 1px 9px no-repeat; }
.kid .ic12 { position: relative; }
.picked { display: flex; align-items: center; gap: 8px; background: #316ac5; height: 16px; width: 57px; margin-left: -3px; padding-left: 3px; position: relative; }

.props { flex: 1; display: flex; flex-direction: column; padding-left: 3px; padding-right: 4px; min-width: 0; }
.tab { width: 63px; height: 20px; margin-top: 1px; background: #fff; border: 1px solid #ddd; border-bottom: 0; text-align: center; line-height: 18px; flex: none; }
.prop-panel { height: 571px; margin-left: 4px; background: #fff; border: 1px solid #b4b4b4; border-width: 1px 1px 2px 1px; display: flex; flex: none; }
.prop-scroll { flex: 1; padding-top: 5px; margin-left: -1px; }
.pbar { width: 18px; background: #f0f0f0; display: flex; flex-direction: column; align-items: center; margin-top: 5px; }
.pthumb { width: 18px; height: 330px; background: #cdcdcd; margin-top: 0; margin-bottom: 205px; }

.grid { border-collapse: collapse; table-layout: fixed; width: 370px; }
.c1 { width: 22px; } .c2 { width: 191px; } .c3 { width: 126px; } .c4 { width: 31px; }
.grid th, .grid td { border: 1px solid #bcbcbc; height: 19px; padding: 0; font-weight: 400; white-space: nowrap; overflow: hidden; }
.grid th { height: 23px; background: linear-gradient(#fff, #e9e9e9); text-align: center; }
.grid th.hl { background: linear-gradient(#fbdc9f, #f4c163); color: #7a0a6a; }
.grid .n { background: linear-gradient(#f6f6f6, #e6e6e6); text-align: center; }
.n { font: 11px/16px "Liberation Mono", monospace; letter-spacing: -.6px; }
.lk, .nm { padding-left: 20px !important; }
.lk, .lk em { color: #0000e0; }
.v { padding-left: 2px !important; }
.rb { display: inline-block; width: 12px; text-align: center; font: 400 12px/16px "Liberation Serif", serif; }
.cb { display: block; width: 13px; height: 13px; border: 1px solid #444; background: #fff; margin: 0 auto; position: relative; left: 0; }
.cur .n { background: #ffd692; color: #7a0a6a; }
.cur .nm { background: #0078d7; color: #fff; }
.edit { display: flex; align-items: center; justify-content: space-between; height: 18px; padding-right: 1px; }
.caret { display: block; width: 1px; height: 13px; background: #111; margin-left: 0; }
.dots { width: 15px; height: 15px; background: #e1e1e1; border: 1px solid #bbb; font: bold 10px/12px "Liberation Sans", sans-serif; text-align: center; }
.gn { color: #8a8a8a; }
.gi { display: flex; align-items: center; height: 18px; gap: 5px; padding-left: 3px; }
.plus { display: block; width: 12px; height: 12px; border: 1px solid #999; background:
  linear-gradient(#111, #111) center / 6px 1px no-repeat,
  linear-gradient(#111, #111) center / 1px 6px no-repeat, #fff; }

/* status */
.status { height: 20px; margin-top: 1px; display: flex; background: #f0f0f0; gap: 2px; flex: none; }
.s { height: 20px; background: linear-gradient(#fff, #f2f2f2); border: 1px solid #dedede; padding-left: 2px; line-height: 18px; white-space: nowrap; }
.s em { line-height: 18px; }
.s0 { width: 148px; }
.s1 { width: 78px; }
.s2 { width: 97px; }
.s3 { width: 49px; }
.s4 { width: 917px; }
.s5 { width: 69px; }

/* taskbar */
.taskbar { height: 40px; background: #03090e; display: flex; color: #fff; flex: none; }
.start { width: 48px; background: #000; display: flex; align-items: center; justify-content: center; }
.tsearch { width: 344px; background: #333; display: flex; align-items: center; padding-left: 9px; }
.cortana { display: block; width: 22px; height: 22px; border: 3px solid #dcdcdc; border-radius: 50%; margin-right: 5px; }
.ts-text { color: #7f95a5; font-size: 14px; }
.mic { width: 14px; height: 18px; margin-left: auto; margin-right: 14px; }
.ti { width: 49px; height: 40px; display: flex; align-items: center; justify-content: center; position: relative; }
.tsearch + .ti { margin-left: 2px; }
.ti-shift { margin-left: 3px; }
.run::after { content: ""; position: absolute; left: 5px; right: 5px; bottom: 0; height: 2px; background: #76b9ed; }
.act { background: #3a4447; }
.act::after { left: 0; right: 0; }
.tray { margin-left: auto; width: 380px; display: flex; align-items: center; flex: none; }
.cpu { width: 60px; margin-right: 8px; text-align: center; font-size: 12px; line-height: 19px; display: flex; flex-direction: column; white-space: nowrap; }
.trc { width: 24px; height: 16px; }
.trk { width: 30px; height: 14px; }
.ime { width: 24px; text-align: center; font: 700 17px "Liberation Serif", serif; }
.tr-s { width: 36px; display: flex; justify-content: center; }
.clock { width: 72px; text-align: center; line-height: 20px; display: flex; flex-direction: column; white-space: nowrap; }
.notif { width: 44px; position: relative; height: 40px; }
.msg { position: absolute; left: 10px; top: 12px; width: 16px; height: 14px; }
.nbadge { position: absolute; left: 10px; top: 19px; width: 24px; height: 16px; background: #444; border: 1px solid #888; border-radius: 8px; font: 700 12px/14px "Liberation Sans", sans-serif; text-align: center; color: #fff; }

/* floating layers */
.ball { position: absolute; left: 1111px; top: -31px; width: 50px; height: 50px; border-radius: 50%; background: #3cc35c; border: 2px solid #c7c7c7; box-shadow: 0 1px 3px #888; color: #fff; font-weight: 700; text-align: center; padding-top: 31px; line-height: 14px; }
.popup { position: absolute; left: 731px; top: 150px; width: 269px; height: 283px; border: 1px solid #555; background: linear-gradient(#b9c8d8, #d4e1ef 14%, #d6e3f1); padding: 9px 7px 0 8px; box-shadow: inset 0 0 0 1px #dfe8f2; }
.pop-title { height: 21px; color: #8d8d8d; line-height: 20px; margin-bottom: 1px; }
.pop-canvas { width: 252px; height: 242px; box-shadow: 0 0 0 1px #eef3f8; }
.cv { fill: #fff; font-family: "Liberation Serif", "Noto Sans CJK SC", serif; }
.cv14 { font-size: 14px; }
.cv16 { font-size: 16px; }
.cv20 { font-size: 20px; letter-spacing: 1px; }
.marks { position: absolute; left: 0; top: 0; width: 1366px; height: 768px; pointer-events: none; }
.marks ellipse { fill: none; stroke: #f00; stroke-width: 7; }
```
